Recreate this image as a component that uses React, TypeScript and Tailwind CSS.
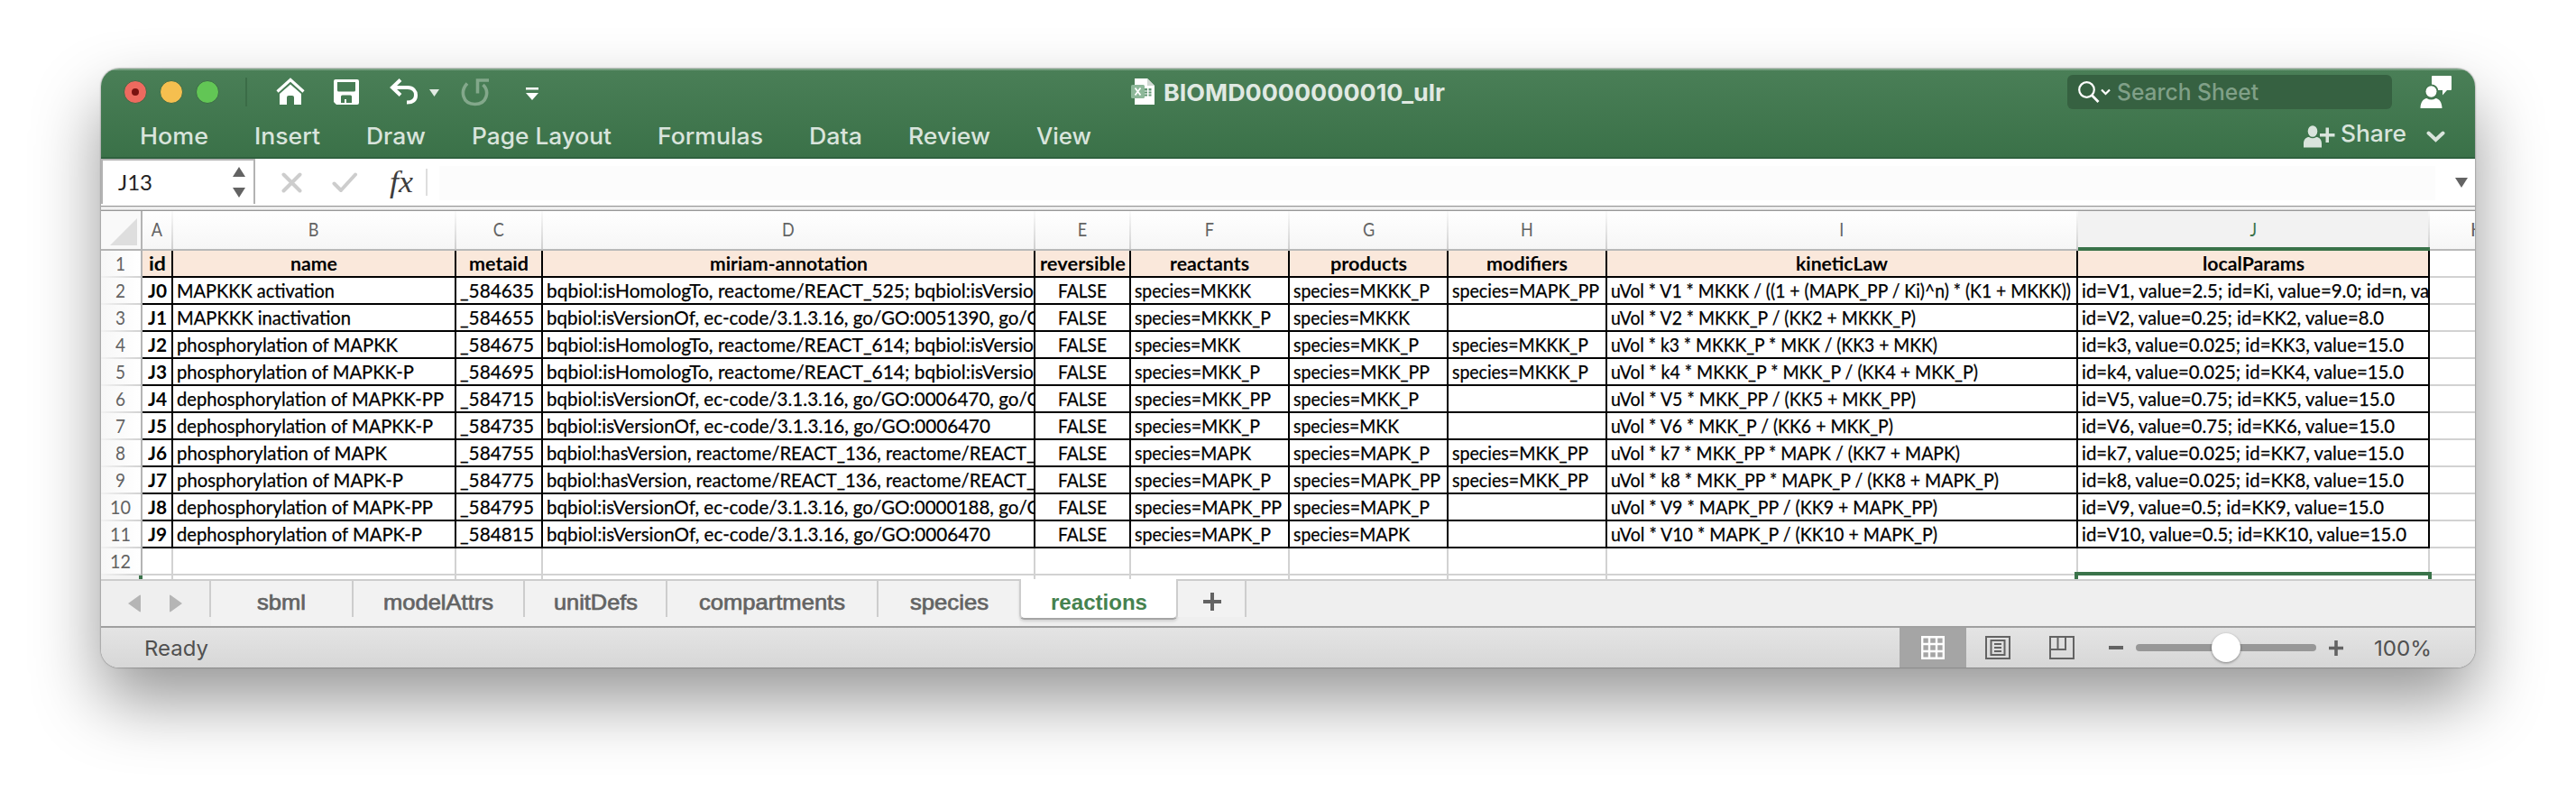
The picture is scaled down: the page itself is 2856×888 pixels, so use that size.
import { useLayoutEffect, useRef, useState } from "react";
import type { ReactNode } from "react";

/** Text condensed or widened horizontally to a given advance width; `tail` follows at the same scale. */
function Fit({ t, w, tail = "", className = "" }: { t: string; w: number; tail?: string; className?: string }) {
  const ref = useRef<HTMLSpanElement>(null);
  const [scale, setScale] = useState(1);
  useLayoutEffect(() => {
    const el = ref.current;
    if (!el) return;
    const natural = el.getBoundingClientRect().width / scale;
    const next = w / natural;
    if (Math.abs(next - scale) > 0.001) setScale(next);
  }, [t, w, scale]);
  return (
    <span className={`inline-block text-left whitespace-pre ${className}`} style={{ width: `${w}px` }}>
      <span className="inline-block origin-left" style={{ transform: `scaleX(${scale})` }}>
        <span ref={ref}>{t}</span>
        {tail}
      </span>
    </span>
  );
}

const COLS =
  "grid grid-cols-[46px_34px_314px_96px_546px_106px_176px_176px_176px_522px_390px_50px]";

type Txt = [string, number, string?];

const headers: Txt[] = [
  ["id", 19], ["name", 52], ["metaid", 66], ["miriam-annotation", 175], ["reversible", 95],
  ["reactants", 88], ["products", 85], ["modifiers", 90], ["kineticLaw", 102], ["localParams", 113],
];

const sp: Record<string, number> = {
  MKKK: 129, MKKK_P: 151, MKK: 117, MKK_P: 139, MKK_PP: 151, MAPK: 129, MAPK_P: 151, MAPK_PP: 163,
};

const HOM = "bqbiol:isHomologTo, reactome/REACT_";
const VER = "bqbiol:isVersionOf, ec-code/3.1.3.16, go/GO:";
const HAS: Txt = ["bqbiol:hasVersion, reactome/REACT_136, reactome/REACT", 532, "_"];

const rows: { id: string; name: Txt; meta: string; ann: Txt; r: string; p: string; m?: string; law: Txt; par: Txt }[] = [
  { id: "J0", name: ["MAPKKK activation", 175], meta: "_584635", ann: [HOM + "525; bqbiol:isVersio", 540, "n"], r: "MKKK", p: "MKKK_P", m: "MAPK_PP", law: ["uVol * V1 * MKKK / ((1 + (MAPK_PP / Ki)^n) * (K1 + MKKK))", 510], par: ["id=V1, value=2.5; id=Ki, value=9.0; id=n,", 360, " va"] },
  { id: "J1", name: ["MAPKKK inactivation", 193], meta: "_584655", ann: [VER + "0051390,", 496, " go/G"], r: "MKKK_P", p: "MKKK", law: ["uVol * V2 * MKKK_P / (KK2 + MKKK_P)", 338], par: ["id=V2, value=0.25; id=KK2, value=8.0", 335] },
  { id: "J2", name: ["phosphorylation of MAPKK", 245], meta: "_584675", ann: [HOM + "614; bqbiol:isVersio", 540, "n"], r: "MKK", p: "MKK_P", m: "MKKK_P", law: ["uVol * k3 * MKKK_P * MKK / (KK3 + MKK)", 362], par: ["id=k3, value=0.025; id=KK3, value=15.0", 357] },
  { id: "J3", name: ["phosphorylation of MAPKK-P", 263], meta: "_584695", ann: [HOM + "614; bqbiol:isVersio", 540, "n"], r: "MKK_P", p: "MKK_PP", m: "MKKK_P", law: ["uVol * k4 * MKKK_P * MKK_P / (KK4 + MKK_P)", 407], par: ["id=k4, value=0.025; id=KK4, value=15.0", 357] },
  { id: "J4", name: ["dephosphorylation of MAPKK-PP", 296], meta: "_584715", ann: [VER + "0006470,", 496, " go/G"], r: "MKK_PP", p: "MKK_P", law: ["uVol * V5 * MKK_PP / (KK5 + MKK_PP)", 338], par: ["id=V5, value=0.75; id=KK5, value=15.0", 347] },
  { id: "J5", name: ["dephosphorylation of MAPKK-P", 284], meta: "_584735", ann: [VER + "0006470", 492], r: "MKK_P", p: "MKK", law: ["uVol * V6 * MKK_P / (KK6 + MKK_P)", 313], par: ["id=V6, value=0.75; id=KK6, value=15.0", 347] },
  { id: "J6", name: ["phosphorylation of MAPK", 233], meta: "_584755", ann: HAS, r: "MAPK", p: "MAPK_P", m: "MKK_PP", law: ["uVol * k7 * MKK_PP * MAPK / (KK7 + MAPK)", 387], par: ["id=k7, value=0.025; id=KK7, value=15.0", 357] },
  { id: "J7", name: ["phosphorylation of MAPK-P", 251], meta: "_584775", ann: HAS, r: "MAPK_P", p: "MAPK_PP", m: "MKK_PP", law: ["uVol * k8 * MKK_PP * MAPK_P / (KK8 + MAPK_P)", 430], par: ["id=k8, value=0.025; id=KK8, value=15.0", 357] },
  { id: "J8", name: ["dephosphorylation of MAPK-PP", 284], meta: "_584795", ann: [VER + "0000188,", 496, " go/G"], r: "MAPK_PP", p: "MAPK_P", law: ["uVol * V9 * MAPK_PP / (KK9 + MAPK_PP)", 362], par: ["id=V9, value=0.5; id=KK9, value=15.0", 335] },
  { id: "J9", name: ["dephosphorylation of MAPK-P", 272], meta: "_584815", ann: [VER + "0006470", 492], r: "MAPK_P", p: "MAPK", law: ["uVol * V10 * MAPK_P / (KK10 + MAPK_P)", 362], par: ["id=V10, value=0.5; id=KK10, value=15.0", 360] },
];

function RowNumber({ n }: { n: number }) {
  return (
    <div className="flex flex-col border-r-2 border-[#b4b4b4] bg-linear-to-r from-[#f7f7f7] to-white">
      <div className="h-7 pr-[2px] text-center leading-7 text-[#636363]">
        <Fit t={String(n)} w={n > 9 ? 23 : 11} />
      </div>
      <div className="h-[2px] bg-linear-to-r from-[#f2f2f2] to-[#d2d2d2]" />
    </div>
  );
}

function Cell({ children, center, bold, fill }: { children?: ReactNode; center?: boolean; bold?: boolean; fill?: boolean }) {
  return (
    <div
      className={`h-[30px] overflow-hidden border-r-2 border-b-2 border-black leading-7 whitespace-nowrap ${center ? "text-center" : "pl-[4px]"} ${bold ? "font-bold" : "[-webkit-text-stroke:0.25px_#000]"} ${fill ? "bg-[#fae8db]" : ""}`}
    >
      {children}
    </div>
  );
}

const letters = ["A", "B", "C", "D", "E", "F", "G", "H", "I", "J"];

function Sheet() {
  return (
    <div className="relative h-[408px] overflow-hidden bg-white font-[Lato,sans-serif] text-[20.500px] text-black">
      <div className={`${COLS} h-[44px]`}>
        <div className="flex h-[44px] items-end justify-end border-r-2 border-b-2 border-[#b4b4b4] bg-[#f9f9f9] pr-1 pb-1">
          <svg width="30" height="30" viewBox="0 0 30 30"><path d="M30 0V30H0Z" fill="#dedede" /></svg>
        </div>
        {letters.map((l) => (
          <div
            key={l}
            className={`flex h-[44px] ${l === "J" ? "border-b-4 border-[#3a734a] bg-[#f2f2f2] text-[#3a734a]" : "border-b-2 border-[#b9b9b9] bg-linear-to-b from-white to-[#f6f6f6] text-[#636363]"}`}
          >
            <div className="flex-1 text-center leading-[41px]"><span className="inline-block scale-x-88">{l}</span></div>
            <div className="w-[2px] bg-linear-to-b from-[#fafafa] to-[#d0d0d0]" />
          </div>
        ))}
        <div className="h-[44px] overflow-hidden border-b-2 border-[#b9b9b9] bg-linear-to-b from-white to-[#f6f6f6] pl-[45px] leading-[41px] text-[#636363]">K</div>
      </div>

      <div className={COLS}>
        <RowNumber n={1} />
        {headers.map((h) => (
          <Cell key={h[0]} center bold fill><Fit t={h[0]} w={h[1]} /></Cell>
        ))}
        <div className="h-[30px] border-b-2 border-[#d2d2d2]" />
      </div>

      {rows.map((r, i) => (
        <div key={r.id} className={COLS}>
          <RowNumber n={i + 2} />
          <Cell center bold><Fit t={r.id} w={21} /></Cell>
          <Cell><Fit t={r.name[0]} w={r.name[1]} /></Cell>
          <Cell><Fit t={r.meta} w={82} /></Cell>
          <Cell><Fit t={r.ann[0]} w={r.ann[1]} tail={r.ann[2]} /></Cell>
          <Cell center><Fit t="FALSE" w={54} /></Cell>
          <Cell><Fit t={"species=" + r.r} w={sp[r.r]} /></Cell>
          <Cell><Fit t={"species=" + r.p} w={sp[r.p]} /></Cell>
          <Cell>{r.m ? <Fit t={"species=" + r.m} w={sp[r.m]} /> : null}</Cell>
          <Cell><Fit t={r.law[0]} w={r.law[1]} /></Cell>
          <Cell><Fit t={r.par[0]} w={r.par[1]} tail={r.par[2]} /></Cell>
          <div className="h-[30px] border-b-2 border-[#d2d2d2]" />
        </div>
      ))}

      <div className={COLS}>
        <RowNumber n={12} />
        {letters.map((l) => <div key={l} className="h-[30px] border-r-2 border-b-2 border-[#d2d2d2]" />)}
        <div className="h-[30px] border-b-2 border-[#d2d2d2]" />
      </div>
      <div className={COLS}>
        <div className="h-[4px] border-r-4 border-[#3a734a] bg-[#f4f4f4]" />
        {letters.map((l) => <div key={l} className="h-[4px] border-r-2 border-[#d2d2d2]" />)}
      </div>
      <div className="absolute bottom-0 left-[2188px] h-[8px] w-[396px] border-x-4 border-t-4 border-[#3a734a]" />
    </div>
  );
}

function TitleBar() {
  return (
    <div className="flex h-[52px] items-center">
      <div className="ml-[25px] flex gap-[14px]">
        <div className="flex size-[26px] items-center justify-center rounded-full border border-[#3c6b47] bg-[#ee6a5f]">
          <div className="size-2 rounded-full bg-[#7a1210]" />
        </div>
        <div className="size-[26px] rounded-full border border-[#3c6b47] bg-[#f5bf4f]" />
        <div className="size-[26px] rounded-full border border-[#3c6b47] bg-[#62c655]" />
      </div>
      <div className="ml-[29px] h-8 w-[2px] bg-[#3b6c47]" />
      <svg className="ml-[32px]" width="32" height="32" viewBox="0 0 32 32" fill="none">
        <path d="M1.5 15.5L16 2.5L30.5 15.5" stroke="#fff" strokeWidth="3.2" />
        <path d="M4 18L16 7.5L28 18V30H20V22Q20 20 18 20H14Q12 20 12 22V30H4Z" fill="#fff" />
      </svg>
      <svg className="ml-[32px]" width="28" height="28" viewBox="0 0 28 28">
        <path fillRule="evenodd" fill="#fff" d="M2 0H26Q28 0 28 2V26Q28 28 26 28H3L0 25V2Q0 0 2 0ZM4 3V12Q4 13.500 5.500 13.500H22.500Q24 13.500 24 12V3ZM8 19V26H12V22H14V26H20V19Q20 17.500 18.500 17.500H9.500Q8 17.500 8 19Z" />
      </svg>
      <svg className="ml-[34px]" width="32" height="30" viewBox="0 0 32 30" fill="none" stroke="#fff" strokeWidth="4">
        <path d="M12 1.500L3 10L12 18.500" />
        <path d="M3 10H20C26 10 29 14 29 18.500C29 24 25 26.500 19 26.500" />
      </svg>
      <svg className="ml-[12px] mt-[2px]" width="11" height="8" viewBox="0 0 11 8"><path d="M0 0H11L5.500 8Z" fill="#e1eae3" /></svg>
      <svg className="ml-[24px]" width="33" height="32" viewBox="0 0 33 32" fill="none" stroke="#83a88b" strokeWidth="3.600">
        <path d="M7 6.500C-1 15 1.500 29 15.500 29.500C29 29.500 32 15 24.500 8" />
        <path d="M31 3H18.500V17.500" />
      </svg>
      <svg className="mt-[4px] ml-[39px]" width="14" height="14" viewBox="0 0 14 14" fill="#fff"><path d="M0 0H14V2.500H0ZM0 6H14L7 14Z" /></svg>

      <svg className="ml-[657px]" width="27" height="30" viewBox="0 0 27 30">
        <path d="M4 0H18L26 8V29H4Z" fill="#fff" />
        <path d="M18 0V8H26Z" fill="#cfd8d1" />
        <path d="M15 11h3v2.500h-3zM19.500 11h3v2.500h-3zM15 14.500h3v2h-3zM19.500 14.500h3v2h-3zM15 17.500h3v2h-3zM19.500 17.500h3v2h-3z" fill="#5f9470" />
        <rect x="0" y="7" width="15" height="15" rx="1.500" fill="#8db899" />
        <path d="M4.500 10.500L10.500 18.500M10.500 10.500L4.500 18.500" stroke="#fff" strokeWidth="1.800" />
      </svg>
      <div className="ml-[9px] pt-[1px] text-[26px] font-bold text-[#e0e9e2]"><Fit t="BIOMD0000000010_ulr" w={312} /></div>

      <div className="ml-[690px] flex h-[38px] w-[360px] items-center rounded-[6px] bg-[#366141] pl-[12px]">
        <svg width="24" height="24" viewBox="0 0 24 24" fill="none" stroke="#fff" strokeWidth="2.200">
          <circle cx="9.500" cy="9.500" r="8.300" />
          <path d="M15.200 15.500L22.500 23" strokeWidth="2.800" />
        </svg>
        <svg className="ml-[1px]" width="11" height="8" viewBox="0 0 11 8" fill="none" stroke="#fff" strokeWidth="2.200"><path d="M1 1.500L5.500 6L10 1.500" /></svg>
        <div className="ml-[7px] pt-[1px] text-[25px] font-medium text-[#80a088]"><Fit t="Search Sheet" w={157} /></div>
      </div>
      <svg className="ml-[31px]" width="36" height="38" viewBox="0 0 36 38">
        <path d="M13 2Q13 1 14 1H34Q35 1 35 2V16Q35 17 34 17H30L25 22.500V17H13Z" fill="#fff" />
        <ellipse cx="12.500" cy="18.500" rx="8" ry="8" fill="#43774f" />
        <ellipse cx="12.500" cy="18.500" rx="6" ry="6.200" fill="#fff" />
        <path d="M.500 37C.500 30 4 26.500 7.500 26Q12.500 29 17.500 26C21 26.500 24.500 30 24.500 37Z" fill="#fff" />
      </svg>
    </div>
  );
}

const menus: [string, number][] = [
  ["Home", 76], ["Insert", 73], ["Draw", 66], ["Page Layout", 155],
  ["Formulas", 117], ["Data", 59], ["Review", 91], ["View", 61],
];

function MenuBar() {
  return (
    <div className="flex h-[48px] items-center border-b-2 border-[#2f613e] text-[25.500px] font-medium text-[#d9e4dc]">
      <div className="ml-[43px] flex gap-[51px] pt-[1px]">
        {menus.map(([t, w]) => <Fit key={t} t={t} w={w} />)}
      </div>
      <div className="ml-auto flex items-center pr-[33px] pb-[5px]">
        <svg className="mt-[6px]" width="35" height="25" viewBox="0 0 35 25" fill="#d9e4dc">
          <ellipse cx="10" cy="6.500" rx="5.300" ry="6.300" />
          <path d="M0 24.500V20C0 15.500 3 13 6 13Q10 15.500 14 13C17 13 20 15.500 20 20V24.500Z" />
          <path d="M18 9H24.500V2.500H28V9H34.500V12.500H28V19H24.500V12.500H18Z" />
        </svg>
        <Fit t="Share" w={73} className="ml-[6px]" />
        <svg className="mt-[6px] ml-[22px]" width="21" height="13" viewBox="0 0 21 13" fill="none" stroke="#d9e4dc" strokeWidth="4" strokeLinecap="round"><path d="M2.500 2.500L10.500 10L18.500 2.500" /></svg>
      </div>
    </div>
  );
}

function FormulaBar() {
  return (
    <div className="flex h-[58px] flex-col bg-white">
      <div className="flex h-[52px]">
        <div className="flex h-[50px] w-[171px] items-center justify-between border-2 border-b-0 border-[#b3b3b3] pr-[9px] pl-[17px] font-[Lato,sans-serif] text-[24px] text-[#222]">
          <Fit t="J13" w={38} />
          <svg width="14" height="34" viewBox="0 0 14 34" fill="#636363"><path d="M7 0L14 11H0ZM7 34L14 23H0Z" /></svg>
        </div>
        <div className="flex items-center">
          <svg className="ml-[29px]" width="23" height="23" viewBox="0 0 23 23" fill="none" stroke="#cdcdcd" strokeWidth="4" strokeLinecap="round"><path d="M2.500 2.500L20.500 20.500M20.500 2.500L2.500 20.500" /></svg>
          <svg className="ml-[33px]" width="29" height="23" viewBox="0 0 29 23" fill="none" stroke="#cdcdcd" strokeWidth="4" strokeLinecap="round" strokeLinejoin="round"><path d="M2.500 12.500L10 20L26 2.500" /></svg>
          <div className="ml-[35px] w-[28px] font-['Liberation_Serif',serif] text-[33px] leading-[40px] text-[#3d3d3d] italic"><Fit t="fx" w={26} /></div>
          <div className="ml-[12px] h-[30px] w-[2px] bg-[#dedede]" />
        </div>
        <div className="mt-[8px] ml-[13px] h-[38px] w-[2213px] bg-[#fcfcfc]" />
        <svg className="mt-[21px] ml-[22px]" width="14" height="11" viewBox="0 0 14 11"><path d="M0 0H14L7 11Z" fill="#636363" /></svg>
      </div>
      <div className="h-[6px] border-y border-[#989898] bg-linear-to-b from-[#d4d4d4] via-white to-[#c4c4c4]" />
    </div>
  );
}

const tabs: [string, number, string][] = [
  ["sbml", 54, "w-[158px]"], ["modelAttrs", 122, "w-[190px]"], ["unitDefs", 93, "w-[158px]"],
  ["compartments", 162, "w-[234px]"], ["species", 87, "w-[156px]"],
];

function TabBar() {
  return (
    <div className="flex h-[54px] border-b-2 border-[#a0a0a0] bg-[#efefef] font-['Liberation_Sans',sans-serif] text-[24px] text-[#636363]">
      <div className="flex h-[42px] w-[122px] border-t-2 border-r-2 border-[#cdcdcd] pt-[15px] pl-[30px]">
        <svg width="61" height="20" viewBox="0 0 61 20" fill="#b5b5b5"><path d="M14 1.500V18.500Q14 20 12.500 19L0 10L12.500 1Q14 0 14 1.500ZM46 1.500V18.500Q46 20 47.500 19L60 10L47.500 1Q46 0 46 1.500Z" /></svg>
      </div>
      {tabs.map(([t, w, cls], i) => (
        <div key={t} className={`h-[52px] border-t-2 border-[#cdcdcd] bg-[#f2f2f2] ${cls}`}>
          <div className={`h-[40px] pt-[4px] text-center leading-[40px] [-webkit-text-stroke:0.7px_#636363] ${i < 4 ? "border-r-2 border-[#cdcdcd]" : ""}`}>
            <Fit t={t} w={w} />
          </div>
        </div>
      ))}
      <div className="h-[52px] w-[176px]">
        <div className="h-[45px] rounded-b-[6px] border-x-2 border-b-2 border-x-[#cdcdcd] border-b-[#a5a5a5] bg-white pt-[6px] text-center leading-[40px] font-bold text-[#45824f] shadow-[0_2px_3px_rgba(0,0,0,0.12)]">
          <Fit t="reactions" w={107} />
        </div>
      </div>
      <div className="h-[42px] w-[76px] border-t-2 border-r-2 border-[#cdcdcd] bg-[#f2f2f2] pt-[13px] pl-[28px]">
        <svg width="20" height="20" viewBox="0 0 20 20"><path d="M8 0H12V8H20V12H12V20H8V12H0V8H8Z" fill="#636363" /></svg>
      </div>
      <div className="h-[42px] flex-1 border-t-2 border-[#cdcdcd]" />
    </div>
  );
}

function StatusBar() {
  return (
    <div className="flex h-[44px] items-center bg-linear-to-b from-[#e4e4e4] to-[#d7d7d7] text-[23.500px] text-[#505050]">
      <div className="ml-[48px] pt-[1px]"><Fit t="Ready" w={71} /></div>
      <div className="ml-auto flex h-full items-center pr-[48px]">
        <div className="flex h-full w-[74px] items-center justify-center bg-[#a5a5a5]">
          <svg width="26" height="26" viewBox="0 0 26 26" fill="none" stroke="#fff" strokeWidth="2.400"><path d="M1.200 1.200H24.800V24.800H1.200ZM9 1V25M17 1V25M1 9H25M1 17H25" /></svg>
        </div>
        <svg className="ml-[21px]" width="28" height="26" viewBox="0 0 28 26" fill="none" stroke="#636363" strokeWidth="2"><path d="M1 1H27V25H1ZM6.500 5H21.500V21H6.500ZM10 9H18M10 13H18M10 17H18" /></svg>
        <svg className="ml-[43px]" width="28" height="26" viewBox="0 0 28 26" fill="none" stroke="#636363" strokeWidth="2"><path d="M1 1H27V25H1ZM9.500 1V15M18 1V15H1" /></svg>
        <div className="ml-[38px] h-[4px] w-[16px] bg-[#636363]" />
        <div className="ml-[14px] flex h-[8px] w-[200px] items-center justify-center rounded-full bg-[#979797]">
          <div className="size-8 rounded-full bg-white shadow-[0_1px_3px_rgba(0,0,0,0.4)]" />
        </div>
        <svg className="ml-[14px]" width="16" height="17" viewBox="0 0 16 17"><path d="M6.200 0H9.800V6.700H16V10.300H9.800V17H6.200V10.300H0V6.700H6.200Z" fill="#636363" /></svg>
        <div className="ml-[34px] pt-[1px]"><Fit t="100%" w={64} /></div>
      </div>
    </div>
  );
}

export default function App() {
  return (
    <div className="h-[888px] w-[2856px] overflow-hidden bg-white pt-[76px] pl-[112px] font-[Inter,sans-serif]">
      <div className="h-[664px] w-[2632px] rounded-[20px] shadow-[0_37px_74px_rgba(0,0,0,0.41),0_0_2px_rgba(0,0,0,0.6)]">
        <div className="h-[664px] overflow-hidden rounded-[20px]">
          <div className="h-[100px] bg-linear-to-b from-[#4a7f57] to-[#3a7148] shadow-[inset_0_2px_0_rgba(255,255,255,0.25)]">
            <TitleBar />
            <MenuBar />
          </div>
          <FormulaBar />
          <Sheet />
          <TabBar />
          <StatusBar />
        </div>
      </div>
    </div>
  );
}
